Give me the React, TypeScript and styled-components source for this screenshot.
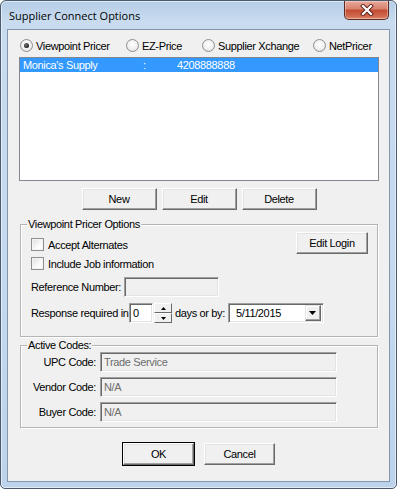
import React from 'react';
import styled, { createGlobalStyle } from 'styled-components';

const Global = createGlobalStyle`
  html, body { margin: 0; padding: 0; background: #ffffff; }
  body {
    width: 399px; height: 490px; overflow: hidden;
    font-family: "Liberation Sans", Arial, sans-serif;
    font-size: 11px; letter-spacing: -0.35px; color: #000;
  }
  * { box-sizing: border-box; }
`;

const Window = styled.div`
  width: 397px;
  height: 489px;
  border: 1px solid #4b5a6c;
  border-radius: 6px 6px 5px 5px;
  background: linear-gradient(to bottom, #b5cde6 0px, #c8dbef 20px, #c4d9ef 60%, #bcd3eb 100%);
  box-shadow: inset 0 0 0 1px rgba(255, 255, 255, 0.55);
  padding: 0 6px 6px 6px;
  display: flex;
  flex-direction: column;
`;

const TitleBar = styled.div`
  height: 28px;
  display: flex;
  justify-content: space-between;
  align-items: flex-start;
  padding-left: 2px;
`;

const TitleText = styled.div`
  font-family: "Open Sans", "Noto Sans", sans-serif;
  font-size: 11px;
  letter-spacing: 0;
  line-height: 16px;
  padding-top: 7px;
  color: #000;
`;

const CloseButton = styled.div`
  width: 45px;
  height: 19px;
  margin-right: 1px;
  border: 1px solid #5e2a23;
  border-top: none;
  border-radius: 0 0 5px 5px;
  background: linear-gradient(to bottom, #e9a99b 0%, #d8816d 45%, #c24a32 50%, #cf6a4f 85%, #e08e6d 100%);
  box-shadow: inset 0 0 0 1px rgba(255, 255, 255, 0.35);
  display: flex;
  align-items: center;
  justify-content: center;
`;

const Client = styled.div`
  flex: 1;
  border: 1px solid #8396ab;
  background: #f0f0f0;
  padding: 0 10px 0 11px;
  display: flex;
  flex-direction: column;
`;

const RadioRow = styled.div`
  margin-top: 9px;
  height: 13px;
  display: flex;
  align-items: center;
  padding-left: 1px;
`;

const RadioItem = styled.div<{ $w?: number }>`
  display: flex;
  align-items: center;
  gap: 3px;
  width: ${(p) => (p.$w ? `${p.$w}px` : 'auto')};
  white-space: nowrap;
`;

const RadioCircle = styled.span<{ $on?: boolean }>`
  width: 13px;
  height: 13px;
  border-radius: 50%;
  border: 1px solid #8f8f8f;
  background: radial-gradient(circle at 50% 40%, #ffffff 0%, #f0f0f0 55%, #d6d6d6 100%);
  display: flex;
  align-items: center;
  justify-content: center;
  flex: none;
  &::after {
    content: '';
    display: ${(p) => (p.$on ? 'block' : 'none')};
    width: 5px;
    height: 5px;
    border-radius: 50%;
    background: radial-gradient(circle at 40% 35%, #7a7a7a, #111 80%);
  }
`;

const ListBox = styled.div`
  margin-top: 5px;
  height: 124px;
  border: 1px solid #828790;
  background: #fff;
`;

const ListItem = styled.div<{ $sel?: boolean }>`
  height: 14px;
  line-height: 14px;
  padding-left: 3px;
  display: flex;
  background: ${(p) => (p.$sel ? '#3399ff' : 'transparent')};
  color: ${(p) => (p.$sel ? '#fff' : '#000')};
  white-space: nowrap;
`;

const Cell = styled.span<{ $w?: number }>`
  width: ${(p) => (p.$w ? `${p.$w}px` : 'auto')};
  flex: none;
`;

const ButtonRow = styled.div<{ $top: number; $gap: number }>`
  margin-top: ${(p) => p.$top}px;
  display: flex;
  justify-content: center;
  gap: ${(p) => p.$gap}px;
`;

const Button = styled.button<{ $w: number; $default?: boolean }>`
  width: ${(p) => p.$w}px;
  height: 22px;
  padding: 0;
  font-family: "Liberation Sans", Arial, sans-serif;
  font-size: 11px;
  letter-spacing: -0.35px;
  color: #000;
  background: #f0f0f0;
  border: 1px solid;
  border-color: #ffffff #696969 #696969 #ffffff;
  box-shadow: inset -1px -1px 0 #a0a0a0, inset 1px 1px 0 #e3e3e3
    ${(p) => (p.$default ? ', 0 0 0 1px #000' : '')};
  border-radius: 0;
`;

const GroupBox = styled.div<{ $top: number; $h: number }>`
  position: relative;
  margin: ${(p) => p.$top}px 1px 0 1px;
  height: ${(p) => p.$h}px;
  border: 1px solid #b4b4b4;
  box-shadow: inset 1px 1px 0 #ffffff, 1px 1px 0 #ffffff;
`;

const GroupTitle = styled.span`
  position: absolute;
  top: -7px;
  left: 6px;
  padding: 0 1px;
  line-height: 13px;
  background: #f0f0f0;
  white-space: nowrap;
`;

const GroupInner = styled.div<{ $pt: number }>`
  padding: ${(p) => p.$pt}px 9px 0 10px;
  display: flex;
  flex-direction: column;
`;

const TopSection = styled.div`
  display: flex;
  justify-content: space-between;
  align-items: flex-start;
`;

const CheckColumn = styled.div`
  padding-top: 13px;
  display: flex;
  flex-direction: column;
  gap: 6px;
`;

const CheckRow = styled.label`
  display: flex;
  align-items: center;
  gap: 4px;
  height: 13px;
  white-space: nowrap;
`;

const CheckBox = styled.span`
  width: 13px;
  height: 13px;
  border: 1px solid #8f8f8f;
  background: linear-gradient(135deg, #dcdcdc 0%, #fbfbfb 60%, #ffffff 100%);
  box-shadow: inset 0 0 0 1px #f4f4f4;
  flex: none;
`;

const FormRow = styled.div<{ $top: number }>`
  margin-top: ${(p) => p.$top}px;
  height: 20px;
  display: flex;
  align-items: center;
  white-space: nowrap;
`;

const Label = styled.span<{ $w?: number; $right?: boolean }>`
  width: ${(p) => (p.$w ? `${p.$w}px` : 'auto')};
  text-align: ${(p) => (p.$right ? 'right' : 'left')};
  flex: none;
`;

const Field = styled.div<{ $w: number; $white?: boolean; $gray?: boolean }>`
  width: ${(p) => p.$w}px;
  height: 20px;
  flex: none;
  background: ${(p) => (p.$white ? '#ffffff' : '#f0f0f0')};
  color: ${(p) => (p.$gray ? '#6d6d6d' : '#000')};
  border-style: solid;
  border-width: 1px;
  border-color: #a0a0a0 #ffffff #ffffff #a0a0a0;
  box-shadow: inset 1px 1px 0 #696969, inset -1px -1px 0 #e3e3e3;
  padding: 2px 0 0 3px;
  line-height: 15px;
  display: flex;
  align-items: flex-start;
`;

const Spin = styled.div`
  width: 18px;
  height: 20px;
  margin-left: 1px;
  display: flex;
  flex-direction: column;
  flex: none;
`;

const SpinHalf = styled.div`
  flex: 1;
  background: #f0f0f0;
  border: 1px solid;
  border-color: #ffffff #696969 #696969 #ffffff;
  display: flex;
  align-items: center;
  justify-content: center;
`;

const Combo = styled.div`
  width: 96px;
  height: 20px;
  margin-left: 3px;
  flex: none;
  background: #fff;
  border-style: solid;
  border-width: 1px;
  border-color: #a0a0a0 #ffffff #ffffff #a0a0a0;
  box-shadow: inset 1px 1px 0 #696969, inset -1px -1px 0 #e3e3e3;
  display: flex;
  align-items: center;
  justify-content: space-between;
  padding: 2px 2px 2px 7px;
`;

const ComboText = styled.span`
  line-height: 14px;
`;

const DropButton = styled.div`
  width: 16px;
  height: 16px;
  background: #f0f0f0;
  border: 1px solid;
  border-color: #e3e3e3 #696969 #696969 #e3e3e3;
  box-shadow: inset -1px -1px 0 #a0a0a0, inset 1px 1px 0 #fff;
  display: flex;
  align-items: center;
  justify-content: center;
`;

const CodeRows = styled.div`
  padding-top: 6px;
  display: flex;
  flex-direction: column;
  gap: 5px;
`;

const CodeRow = styled.div`
  display: flex;
  align-items: center;
  gap: 4px;
  height: 20px;
`;

const Tri = ({ up, size = 3 }: { up?: boolean; size?: number }) => (
  <svg width={size * 2 + 1} height={size + 1} viewBox={`0 0 ${size * 2 + 1} ${size + 1}`}>
    <polygon
      points={up ? `0,${size + 1} ${size * 2 + 1},${size + 1} ${size + 0.5},0` : `0,0 ${size * 2 + 1},0 ${size + 0.5},${size + 1}`}
      fill="#000"
    />
  </svg>
);

export default function App() {
  return (
    <>
      <Global />
      <Window>
        <TitleBar>
          <TitleText>Supplier Connect Options</TitleText>
          <CloseButton>
            <svg width="14" height="12" viewBox="0 0 14 12">
              <path d="M3 2 L11 10 M11 2 L3 10" stroke="#5b1f17" strokeWidth="4" strokeLinecap="square" />
              <path d="M3 2 L11 10 M11 2 L3 10" stroke="#ffffff" strokeWidth="2.2" strokeLinecap="square" />
            </svg>
          </CloseButton>
        </TitleBar>
        <Client>
          <RadioRow>
            <RadioItem $w={106}>
              <RadioCircle $on />
              Viewpoint Pricer
            </RadioItem>
            <RadioItem $w={76}>
              <RadioCircle />
              EZ-Price
            </RadioItem>
            <RadioItem $w={111}>
              <RadioCircle />
              Supplier Xchange
            </RadioItem>
            <RadioItem>
              <RadioCircle />
              NetPricer
            </RadioItem>
          </RadioRow>
          <ListBox>
            <ListItem $sel>
              <Cell $w={120}>Monica's Supply</Cell>
              <Cell $w={34}>:</Cell>
              <Cell>4208888888</Cell>
            </ListItem>
          </ListBox>
          <ButtonRow $top={7} $gap={5}>
            <Button $w={75}>New</Button>
            <Button $w={75}>Edit</Button>
            <Button $w={75}>Delete</Button>
          </ButtonRow>
          <GroupBox $top={14} $h={113}>
            <GroupTitle>Viewpoint Pricer Options</GroupTitle>
            <GroupInner $pt={0}>
              <TopSection>
                <CheckColumn>
                  <CheckRow>
                    <CheckBox />
                    Accept Alternates
                  </CheckRow>
                  <CheckRow>
                    <CheckBox />
                    Include Job information
                  </CheckRow>
                </CheckColumn>
                <Button $w={72} style={{ marginTop: 7 }}>Edit Login</Button>
              </TopSection>
              <FormRow $top={7}>
                <Label $w={93}>Reference Number:</Label>
                <Field $w={95} />
              </FormRow>
              <FormRow $top={6}>
                <Label $w={98}>Response required in</Label>
                <Field $w={24} $white>0</Field>
                <Spin>
                  <SpinHalf>
                    <Tri up size={2} />
                  </SpinHalf>
                  <SpinHalf>
                    <Tri size={2} />
                  </SpinHalf>
                </Spin>
                <Label style={{ marginLeft: 3 }}>days or by:</Label>
                <Combo>
                  <ComboText>5/11/2015</ComboText>
                  <DropButton>
                    <Tri size={3} />
                  </DropButton>
                </Combo>
              </FormRow>
            </GroupInner>
          </GroupBox>
          <GroupBox $top={8} $h={83}>
            <GroupTitle>Active Codes:</GroupTitle>
            <CodeRows>
              <CodeRow>
                <Label $w={75} $right>UPC Code:</Label>
                <Field $w={237} $gray>Trade Service</Field>
              </CodeRow>
              <CodeRow>
                <Label $w={75} $right>Vendor Code:</Label>
                <Field $w={237} $gray>N/A</Field>
              </CodeRow>
              <CodeRow>
                <Label $w={75} $right>Buyer Code:</Label>
                <Field $w={237} $gray>N/A</Field>
              </CodeRow>
            </CodeRows>
          </GroupBox>
          <ButtonRow $top={15} $gap={10}>
            <Button $w={71} $default>OK</Button>
            <Button $w={71}>Cancel</Button>
          </ButtonRow>
        </Client>
      </Window>
    </>
  );
}
